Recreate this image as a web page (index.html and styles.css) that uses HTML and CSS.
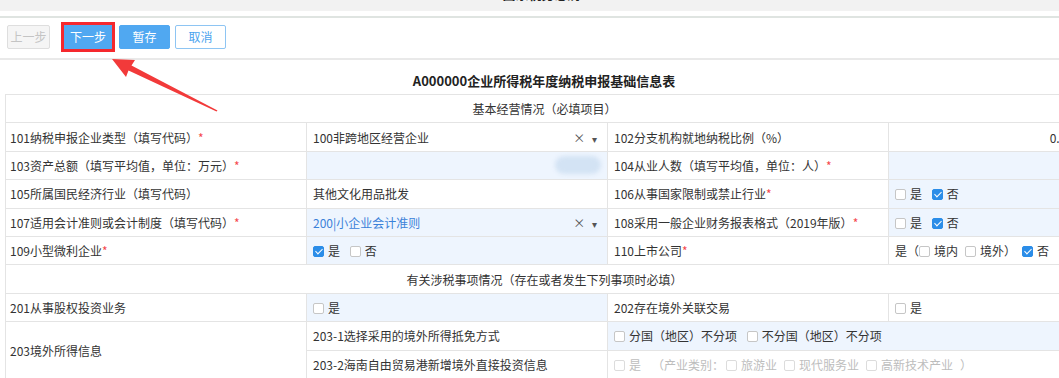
FILE: index.html
```html
<!DOCTYPE html>
<html lang="zh-CN">
<head>
    <meta charset="UTF-8">
    <meta name="viewport" content="width=device-width, initial-scale=1.0">
    <title>A000000企业所得税年度纳税申报基础信息表</title>
    <link rel="stylesheet" href="styles.css">
</head>
<body>
    <div class="topbar"><span class="topbar-text">国家税务总局</span></div>
    <div class="topline"></div>

    <div class="toolbar">
        <button class="btn btn-disabled">上一步</button>
        <button class="btn btn-primary btn-next">下一步</button>
        <button class="btn btn-primary btn-save">暂存</button>
        <button class="btn btn-cancel">取消</button>
    </div>

    <div class="sheet">
        <div class="title">A000000企业所得税年度纳税申报基础信息表</div>

        <table class="form-table">
            <colgroup>
                <col class="col-1">
                <col class="col-2">
                <col class="col-3">
                <col class="col-4">
            </colgroup>
            <tr>
                <td colspan="4" class="section">基本经营情况（必填项目）</td>
            </tr>
            <tr>
                <td class="label">101纳税申报企业类型（填写代码）<span class="req">*</span></td>
                <td>
                    <div class="select">
                        <span>100非跨地区经营企业</span>
                        <span class="select-icons">× <i class="caret">▾</i></span>
                    </div>
                </td>
                <td>102分支机构就地纳税比例（%）</td>
                <td class="num">0.00</td>
            </tr>
            <tr>
                <td class="label">103资产总额（填写平均值，单位：万元）<span class="req">*</span></td>
                <td class="blue"><div class="masked"><span class="blur"></span></div></td>
                <td>104从业人数（填写平均值，单位：人）<span class="req">*</span></td>
                <td class="blue"></td>
            </tr>
            <tr>
                <td class="label">105所属国民经济行业（填写代码）</td>
                <td>其他文化用品批发</td>
                <td>106从事国家限制或禁止行业<span class="req">*</span></td>
                <td class="blue">
                    <span class="opt"><i class="cb"></i>是</span>
                    <span class="opt"><i class="cb checked"></i>否</span>
                </td>
            </tr>
            <tr>
                <td class="label">107适用会计准则或会计制度（填写代码）<span class="req">*</span></td>
                <td class="blue">
                    <div class="select">
                        <span class="link">200|小企业会计准则</span>
                        <span class="select-icons">× <i class="caret">▾</i></span>
                    </div>
                </td>
                <td>108采用一般企业财务报表格式（2019年版）<span class="req">*</span></td>
                <td class="blue">
                    <span class="opt"><i class="cb"></i>是</span>
                    <span class="opt"><i class="cb checked"></i>否</span>
                </td>
            </tr>
            <tr>
                <td class="label">109小型微利企业<span class="req">*</span></td>
                <td class="blue">
                    <span class="opt"><i class="cb checked"></i>是</span>
                    <span class="opt"><i class="cb"></i>否</span>
                </td>
                <td>110上市公司<span class="req">*</span></td>
                <td>
                    是（<span class="opt"><i class="cb"></i>境内</span><span class="opt-tight"><i class="cb"></i>境外</span><span class="paren">）</span><span class="opt"><i class="cb checked"></i>否</span>
                </td>
            </tr>
            <tr>
                <td colspan="4" class="section">有关涉税事项情况（存在或者发生下列事项时必填）</td>
            </tr>
            <tr>
                <td class="label">201从事股权投资业务</td>
                <td class="blue"><span class="opt"><i class="cb"></i>是</span></td>
                <td>202存在境外关联交易</td>
                <td><span class="opt"><i class="cb"></i>是</span></td>
            </tr>
            <tr>
                <td class="label" rowspan="2">203境外所得信息</td>
                <td>203-1选择采用的境外所得抵免方式</td>
                <td colspan="2" class="blue">
                    <span class="opt"><i class="cb"></i>分国（地区）不分项</span>
                    <span class="opt"><i class="cb"></i>不分国（地区）不分项</span>
                </td>
            </tr>
            <tr>
                <td>203-2海南自由贸易港新增境外直接投资信息</td>
                <td colspan="2" class="disabled">
                    <span class="opt"><i class="cb"></i>是</span><span class="group">（产业类别：</span><span class="opt"><i class="cb"></i>旅游业</span><span class="opt"><i class="cb"></i>现代服务业</span><span class="opt"><i class="cb"></i>高新技术产业</span><span class="group-end">）</span>
                </td>
            </tr>
        </table>
    </div>

    <!-- 标注箭头 -->
    <svg class="annotation" width="1059" height="378" viewBox="0 0 1059 378">
        <polygon points="112,59 135,60 131.5,65.5 217.5,110.5 216.5,111.5 128.5,70.5 126,77" fill="#f23a3a"/>
    </svg>
</body>
</html>
```

FILE: styles.css
```css
body {
    margin: 0;
    font-family: "Noto Sans CJK SC", "Microsoft YaHei", sans-serif;
    font-size: 12px;
    color: #333;
    background: #fff;
    overflow: hidden;
}

.topbar {
    height: 11px;
    background: #f2f2f2;
    overflow: hidden;
}

.topbar-text {
    display: block;
    margin-top: -15px;
    padding-left: 24px;
    text-align: center;
    font-size: 13px;
    line-height: 18px;
    font-weight: bold;
    color: #222;
}

.topline {
    height: 5px;
    border-bottom: 2px solid #dfe4e1;
}

.toolbar {
    display: flex;
    align-items: flex-start;
    height: 42px;
    box-sizing: border-box;
    padding: 7px 7px 0;
    border-bottom: 2px solid #e9e9e9;
}

.btn {
    height: 24px;
    box-sizing: border-box;
    padding: 0;
    border: 1px solid;
    border-radius: 2px;
    font-family: inherit;
    font-size: 12px;
    line-height: 22px;
    cursor: pointer;
}

.btn-disabled {
    width: 43px;
    background: #f5f5f5;
    border-color: #dedede;
    color: #c4c4c4;
}

.btn-primary {
    background: #50a8f1;
    border-color: #50a8f1;
    color: #fff;
}

.btn-next {
    width: 48px;
    margin-left: 14px;
    border-radius: 0;
    outline: 3px solid #f5282d;
}

.btn-save {
    width: 51px;
    margin-left: 7px;
}

.btn-cancel {
    width: 51px;
    margin-left: 5px;
    background: #fff;
    border-color: #8ec5f3;
    color: #4aa3ee;
}

.sheet {
    width: 1078px;
    margin-left: 5px;
}

.title {
    text-align: center;
    font-weight: bold;
    font-size: 13px;
    line-height: 20px;
    padding: 11px 0 3px;
    color: #222;
}

.form-table {
    width: 1078px;
    border-collapse: collapse;
    table-layout: fixed;
}

.col-1 { width: 301px; }
.col-2 { width: 301px; }
.col-3 { width: 281px; }
.col-4 { width: 195px; }

.form-table td {
    height: 27.4px;
    padding: 0 6px;
    border: 1px solid #e4e4e4;
    white-space: nowrap;
    vertical-align: middle;
    overflow: hidden;
}

.form-table td.label {
    padding-left: 4px;
}

.form-table td.section {
    text-align: center;
}

.form-table td.num {
    text-align: right;
    padding-right: 10px;
}

.blue {
    background: #eef5fe;
}

.req {
    color: #f5484d;
}

.select {
    display: flex;
    justify-content: space-between;
    align-items: center;
    padding-right: 4px;
}

.select-icons {
    color: #555;
    font-size: 12px;
}

.caret {
    font-style: normal;
    font-size: 10px;
    margin-left: 4px;
}

.link {
    color: #3b82d9;
}

.masked {
    display: flex;
    justify-content: flex-end;
}

.blur {
    width: 46px;
    height: 18px;
    background: #d3e3f4;
    border-radius: 9px;
    filter: blur(2px);
}

.cb {
    display: inline-block;
    position: relative;
    width: 11px;
    height: 11px;
    box-sizing: border-box;
    margin-right: 4px;
    border: 1px solid #c6c6c6;
    border-radius: 2px;
    background: #fff;
    vertical-align: -1px;
}

.cb.checked {
    background: #2b8de8;
    border-color: #2b8de8;
}

.cb.checked::after {
    content: "";
    position: absolute;
    left: 3px;
    top: 0;
    width: 3px;
    height: 6px;
    border: solid #fff;
    border-width: 0 1.5px 1.5px 0;
    transform: rotate(45deg);
}

.opt {
    margin-right: 7px;
}

.opt-tight {
    margin-right: 0;
}

.paren {
    margin-right: 6px;
}

.disabled {
    color: #bdbdbd;
}

.disabled .cb {
    border-color: #dcdcdc;
}

.group {
    margin: 0 2px 0 4px;
}

.annotation {
    position: absolute;
    left: 0;
    top: 0;
    pointer-events: none;
}
```
